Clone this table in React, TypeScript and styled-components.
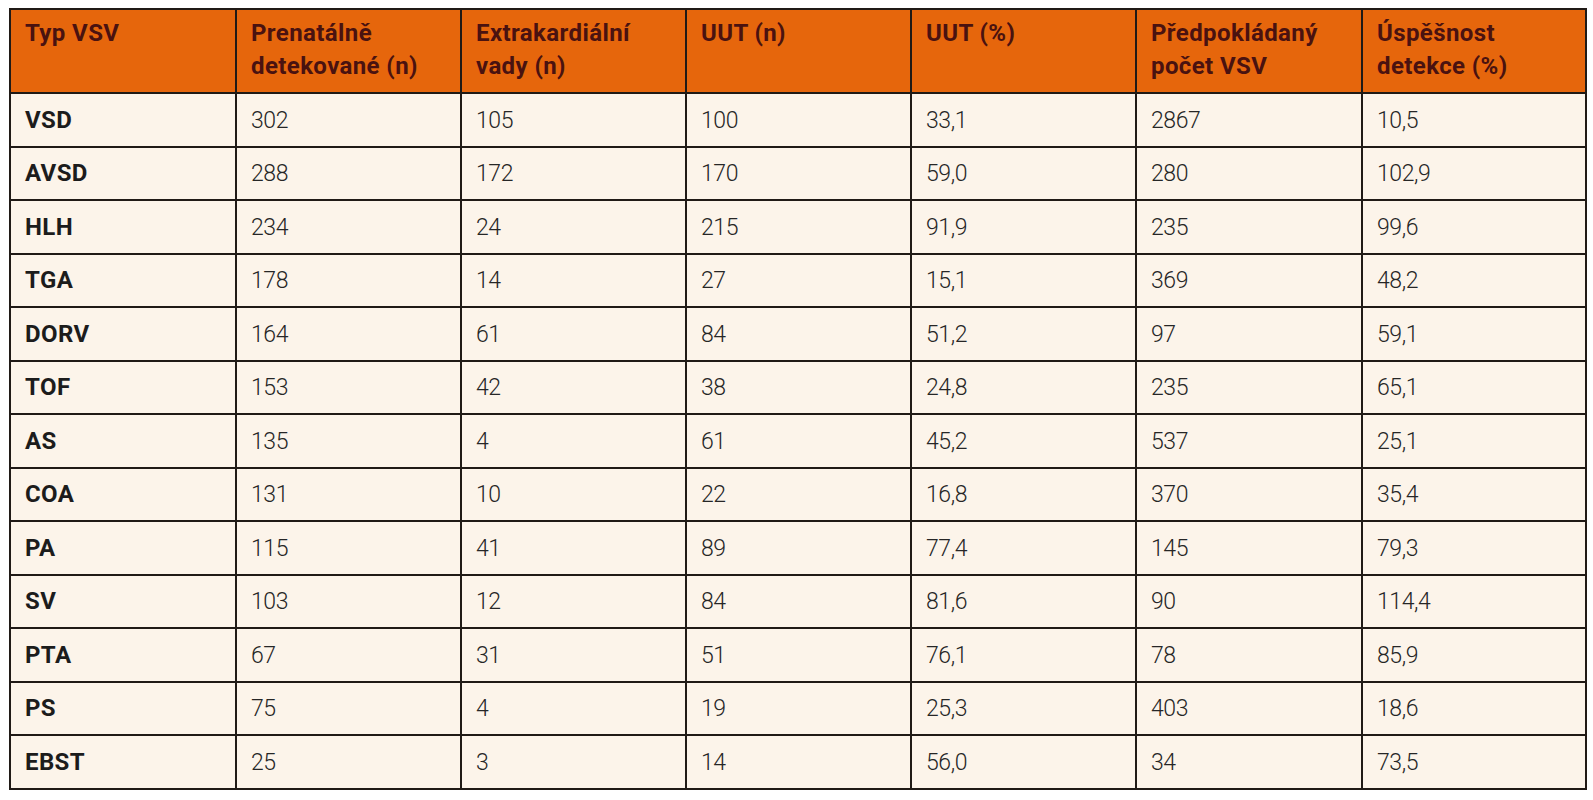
import React from 'react'
import styled, { createGlobalStyle } from 'styled-components'

const GlobalStyle = createGlobalStyle`
  html, body {
    margin: 0;
    padding: 0;
    background: #ffffff;
  }
`

const Page = styled.div`
  padding: 8px 0 0 9px;
  font-family: Roboto, 'Liberation Sans', sans-serif;
`

const Table = styled.table`
  width: 1576px;
  border-collapse: collapse;
  table-layout: fixed;
  background: #fcf4ea;
`

const HeadCell = styled.th`
  background: #e6660c;
  color: #4a1210;
  font-weight: 700;
  font-size: 24px;
  line-height: 33px;
  text-align: left;
  vertical-align: top;
  padding: 7px 14px 9px 14px;
  border: 2px solid #201a16;
  letter-spacing: 0.4px;
`

const Cell = styled.td<{ $label?: boolean }>`
  color: ${(p) => (p.$label ? '#1c1c1c' : '#262626')};
  font-weight: ${(p) => (p.$label ? 700 : 300)};
  font-size: ${(p) => (p.$label ? '24px' : '23px')};
  letter-spacing: ${(p) => (p.$label ? '0.4px' : '-0.4px')};
  line-height: 33px;
  padding: 9.5px 14px 9px 14px;
  border: 2px solid #201a16;
  white-space: nowrap;
`

const headers = [
  'Typ VSV',
  'Prenatálně detekované (n)',
  'Extrakardiální vady (n)',
  'UUT (n)',
  'UUT (%)',
  'Předpokládaný počet VSV',
  'Úspěšnost detekce (%)',
]

const rows: string[][] = [
  ['VSD', '302', '105', '100', '33,1', '2867', '10,5'],
  ['AVSD', '288', '172', '170', '59,0', '280', '102,9'],
  ['HLH', '234', '24', '215', '91,9', '235', '99,6'],
  ['TGA', '178', '14', '27', '15,1', '369', '48,2'],
  ['DORV', '164', '61', '84', '51,2', '97', '59,1'],
  ['TOF', '153', '42', '38', '24,8', '235', '65,1'],
  ['AS', '135', '4', '61', '45,2', '537', '25,1'],
  ['COA', '131', '10', '22', '16,8', '370', '35,4'],
  ['PA', '115', '41', '89', '77,4', '145', '79,3'],
  ['SV', '103', '12', '84', '81,6', '90', '114,4'],
  ['PTA', '67', '31', '51', '76,1', '78', '85,9'],
  ['PS', '75', '4', '19', '25,3', '403', '18,6'],
  ['EBST', '25', '3', '14', '56,0', '34', '73,5'],
]

const widths = [226, 225, 225, 225, 225, 226, 224]

const App = () => (
  <>
    <GlobalStyle />
    <Page>
      <Table>
        <colgroup>
          {widths.map((w, i) => (
            <col key={i} style={{ width: w }} />
          ))}
        </colgroup>
        <thead>
          <tr>
            {headers.map((h) => (
              <HeadCell key={h}>{h}</HeadCell>
            ))}
          </tr>
        </thead>
        <tbody>
          {rows.map((r) => (
            <tr key={r[0]}>
              {r.map((v, i) => (
                <Cell key={i} $label={i === 0}>
                  {v}
                </Cell>
              ))}
            </tr>
          ))}
        </tbody>
      </Table>
    </Page>
  </>
)

export default App
